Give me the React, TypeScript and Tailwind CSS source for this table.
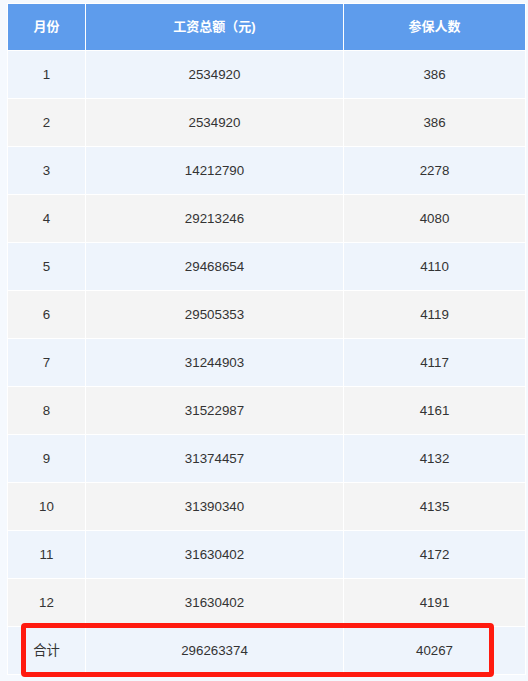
import React from "react";

const rows: [string, string, string][] = [
  ["1", "2534920", "386"],
  ["2", "2534920", "386"],
  ["3", "14212790", "2278"],
  ["4", "29213246", "4080"],
  ["5", "29468654", "4110"],
  ["6", "29505353", "4119"],
  ["7", "31244903", "4117"],
  ["8", "31522987", "4161"],
  ["9", "31374457", "4132"],
  ["10", "31390340", "4135"],
  ["11", "31630402", "4172"],
  ["12", "31630402", "4191"],
  ["合计", "296263374", "40267"],
];

export default function App() {
  return (
    <div
      className="relative w-[528px] h-[681px] bg-[#f5f9fe] pt-[3px] pl-[7px] overflow-hidden"
      style={{ fontFamily: '"Liberation Sans", Arial, "Noto Sans CJK SC", sans-serif' }}
    >
      <table className="w-[518px] border-collapse table-fixed text-[13.33px] text-[#333]">
        <colgroup>
          <col className="w-[78px]" />
          <col className="w-[258px]" />
          <col className="w-[182px]" />
        </colgroup>
        <thead>
          <tr className="h-[47px] bg-[#5e9cec] text-white">
            <th className="border border-white font-bold text-[13px]">月份</th>
            <th className="border border-white font-bold text-[13px]">工资总额（元)</th>
            <th className="border border-white font-bold text-[13px]">参保人数</th>
          </tr>
        </thead>
        <tbody>
          {rows.map((r, i) => (
            <tr
              key={i}
              className={`h-[48px] ${i % 2 === 0 ? "bg-[#eef4fc]" : "bg-[#f4f4f4]"}`}
            >
              <td className="border border-white text-center">{r[0]}</td>
              <td className="border border-white text-center">{r[1]}</td>
              <td className="border border-white text-center">{r[2]}</td>
            </tr>
          ))}
        </tbody>
      </table>
      <div className="absolute left-[21px] top-[623px] w-[473px] h-[54px] border-[5px] border-[#ff1a0f] rounded-[4px]" />
    </div>
  );
}
